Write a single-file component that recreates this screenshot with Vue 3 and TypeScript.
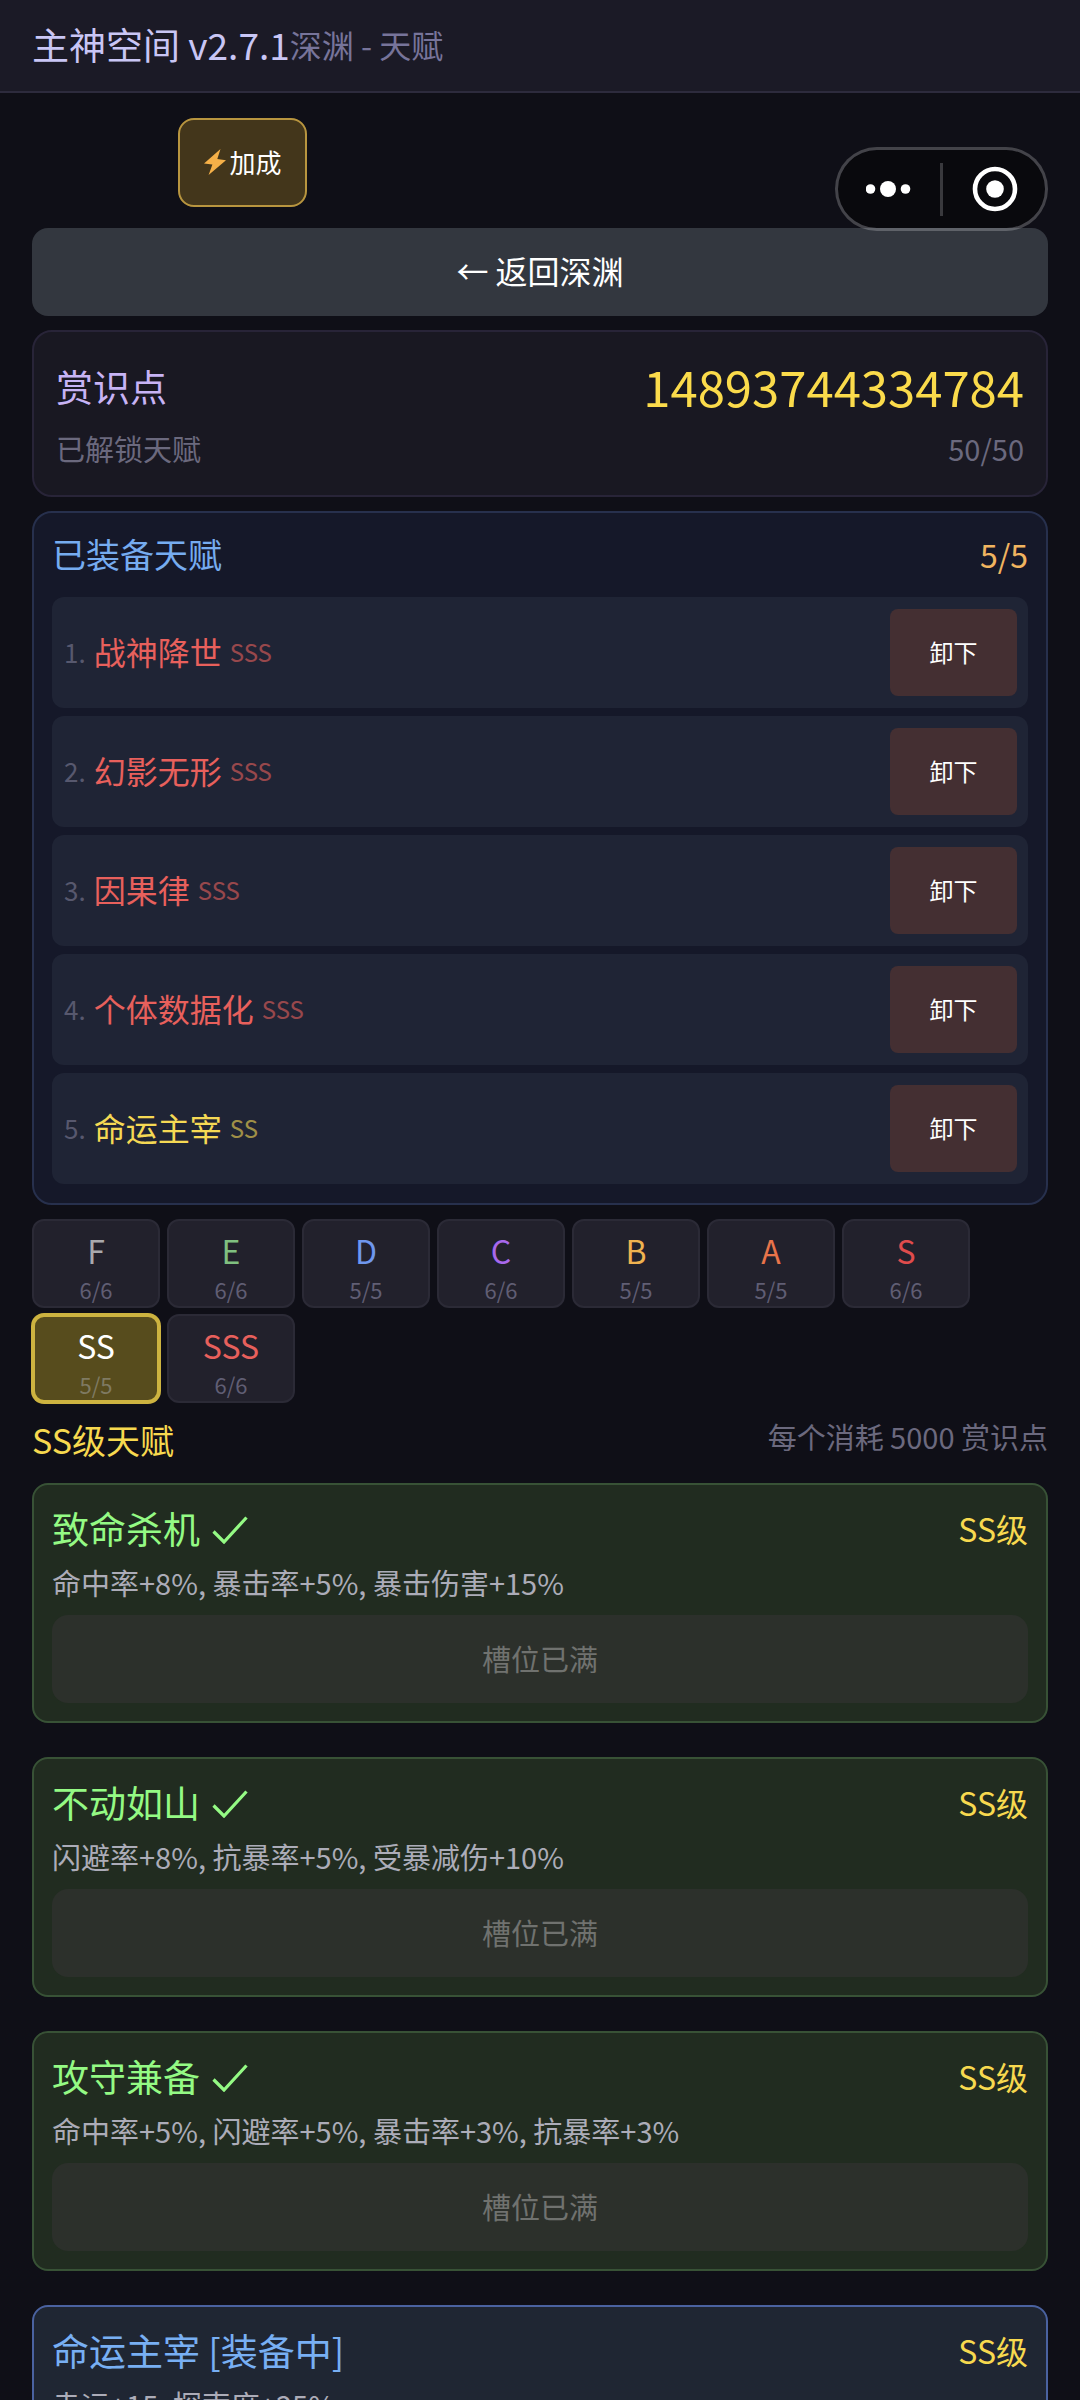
<script setup lang="ts">
import { ref } from 'vue'

interface Equipped {
  name: string
  grade: string
}

interface Grade {
  id: string
  count: string
}

interface Talent {
  name: string
  desc: string
  equipped: boolean
}

const equipped: Equipped[] = [
  { name: '战神降世', grade: 'SSS' },
  { name: '幻影无形', grade: 'SSS' },
  { name: '因果律', grade: 'SSS' },
  { name: '个体数据化', grade: 'SSS' },
  { name: '命运主宰', grade: 'SS' },
]

const grades: Grade[] = [
  { id: 'F', count: '6/6' },
  { id: 'E', count: '6/6' },
  { id: 'D', count: '5/5' },
  { id: 'C', count: '6/6' },
  { id: 'B', count: '5/5' },
  { id: 'A', count: '5/5' },
  { id: 'S', count: '6/6' },
  { id: 'SS', count: '5/5' },
  { id: 'SSS', count: '6/6' },
]

const talents: Talent[] = [
  { name: '致命杀机', desc: '命中率+8%, 暴击率+5%, 暴击伤害+15%', equipped: false },
  { name: '不动如山', desc: '闪避率+8%, 抗暴率+5%, 受暴减伤+10%', equipped: false },
  { name: '攻守兼备', desc: '命中率+5%, 闪避率+5%, 暴击率+3%, 抗暴率+3%', equipped: false },
  { name: '命运主宰', desc: '幸运+15, 探索度+25%', equipped: true },
]

const active = ref('SS')
</script>

<template>
  <div class="app">
    <header class="topbar">
      <h1 class="topbar-title">主神空间 v2.7.1</h1>
      <span class="topbar-sub">深渊 - 天赋</span>
    </header>

    <div class="capsule">
      <button class="capsule-btn" type="button" aria-label="更多">
        <svg width="46" height="20" viewBox="0 0 46 20" fill="#fff">
          <circle cx="4.5" cy="10" r="4.8" />
          <circle cx="22" cy="10" r="8" />
          <circle cx="39.5" cy="10" r="4.8" />
        </svg>
      </button>
      <span class="capsule-line"></span>
      <button class="capsule-btn" type="button" aria-label="关闭">
        <svg width="48" height="46" viewBox="0 0 48 46">
          <circle cx="25" cy="23" r="20" fill="none" stroke="#fff" stroke-width="4.6" />
          <circle cx="25" cy="23" r="8.8" fill="#fff" />
        </svg>
      </button>
    </div>

    <main class="content">
      <div class="tools">
        <button class="bonus" type="button">
          <svg width="24" height="26" viewBox="0 0 24 26" fill="#f5b048" aria-hidden="true">
            <path d="M17.5 0 1 14.6l8.4 1L5.6 26 23 11.2l-8.7-1.1z" />
          </svg>
          <span>加成</span>
        </button>
      </div>

      <button class="back" type="button">← 返回深渊</button>

      <section class="points">
        <div class="row">
          <span class="points-label">赏识点</span>
          <span class="points-value">14893744334784</span>
        </div>
        <div class="row points-sub">
          <span>已解锁天赋</span>
          <span>50/50</span>
        </div>
      </section>

      <section class="equipped">
        <div class="row equipped-head">
          <h2 class="equipped-title">已装备天赋</h2>
          <span class="equipped-count">5/5</span>
        </div>
        <ol class="slots">
          <li v-for="(item, i) in equipped" :key="item.name" class="slot">
            <div class="slot-text">
              <span class="slot-no">{{ i + 1 }}.</span>
              <span class="slot-name" :class="`g-${item.grade}`">{{ item.name }}</span>
              <span class="slot-grade" :class="`g-${item.grade}`">{{ item.grade }}</span>
            </div>
            <button class="remove" type="button">卸下</button>
          </li>
        </ol>
      </section>

      <nav class="grades">
        <button
          v-for="g in grades"
          :key="g.id"
          type="button"
          class="grade"
          :class="{ active: g.id === active }"
          @click="active = g.id"
        >
          <span class="grade-id" :class="`g-${g.id}`">{{ g.id }}</span>
          <span class="grade-count">{{ g.count }}</span>
        </button>
      </nav>

      <div class="section-head">
        <h2 class="section-title">SS级天赋</h2>
        <span class="section-cost">每个消耗 5000 赏识点</span>
      </div>

      <div class="talents">
        <article v-for="t in talents" :key="t.name" class="talent" :class="{ worn: t.equipped }">
          <div class="row">
            <h3 class="talent-name">
              {{ t.name }}
              <template v-if="t.equipped">[装备中]</template>
              <svg v-else class="check" width="36" height="28" viewBox="0 0 36 28" role="img" aria-label="已解锁">
                <path d="M1.5 15.5 12 26 34.5 1.5" fill="none" stroke="currentColor" stroke-width="3.2" />
              </svg>
            </h3>
            <span class="talent-grade">SS级</span>
          </div>
          <p class="talent-desc">{{ t.desc }}</p>
          <button v-if="!t.equipped" class="full" type="button" disabled>槽位已满</button>
        </article>
      </div>
    </main>
  </div>
</template>

<style>
html,
body {
  background: #0f0f17;
}
</style>

<style scoped>
.app {
  position: relative;
  box-sizing: border-box;
  height: 100vh;
  overflow: hidden;
  background: #0f0f17;
  color: #fff;
  font-family: 'Noto Sans CJK SC', 'Noto Sans', sans-serif;
}

.app *,
.app *::before {
  box-sizing: border-box;
}

button {
  margin: 0;
  padding: 0;
  border: 0;
  font: inherit;
  color: inherit;
  background: none;
}

h1,
h2,
h3,
p,
ol {
  margin: 0;
  padding: 0;
  font-weight: 400;
  list-style: none;
}

.row {
  display: flex;
  align-items: center;
  justify-content: space-between;
}

.topbar {
  display: flex;
  align-items: center;
  height: 93px;
  padding: 0 32px 4px;
  background: #1b1a26;
  border-bottom: 2px solid #2d2b3d;
}

.topbar-title {
  font-size: 37px;
  color: #c9c6f5;
}

.topbar-sub {
  font-size: 32px;
  color: #77749a;
}

.capsule {
  position: absolute;
  top: 147px;
  right: 32px;
  z-index: 2;
  display: flex;
  align-items: center;
  width: 213px;
  height: 84px;
  border: 3px solid rgba(255, 255, 255, 0.22);
  border-radius: 42px;
  background: #09090d;
  background-clip: padding-box;
}

.capsule-btn {
  display: flex;
  flex: 1;
  align-items: center;
  justify-content: center;
}

.capsule-line {
  width: 3px;
  height: 53px;
  background: #39393d;
}

.content {
  padding: 25px 32px 0;
}

.tools {
  display: flex;
  padding-left: 146px;
  margin-bottom: 21px;
}

.bonus {
  display: flex;
  align-items: center;
  justify-content: center;
  gap: 2px;
  width: 129px;
  height: 89px;
  padding-bottom: 2px;
  border: 2px solid #b8953f;
  border-radius: 16px;
  background: #43361b;
  font-size: 26px;
}

.back {
  display: block;
  width: 100%;
  height: 88px;
  padding-bottom: 4px;
  border-radius: 16px;
  background: #33373f;
  font-size: 32px;
}

.points {
  margin-top: 14px;
  padding: 24px 22px;
  border: 2px solid #282438;
  border-radius: 20px;
  background: #191822;
  line-height: 60px;
}

.points-label {
  font-size: 37px;
  color: #c7b3f5;
}

.points-value {
  font-size: 49px;
  color: #fbdb4b;
}

.points-sub {
  margin-top: 9px;
  font-size: 29px;
  line-height: 46px;
  color: #6b697e;
}

.equipped {
  margin-top: 14px;
  padding: 16px 18px 19px;
  border: 2px solid #27304d;
  border-radius: 20px;
  background: #151829;
}

.equipped-head {
  margin-bottom: 18px;
  line-height: 50px;
}

.equipped-title {
  font-size: 34px;
  color: #76acf0;
}

.equipped-count {
  font-size: 32px;
  color: #f0b460;
}

.slots {
  display: flex;
  flex-direction: column;
  gap: 8px;
}

.slot {
  display: flex;
  align-items: center;
  justify-content: space-between;
  padding: 12px 11px 12px 12px;
  border-radius: 12px;
  background: #1f2435;
}

.slot-text {
  display: flex;
  align-items: center;
  gap: 8px;
  padding-bottom: 3px;
}

.slot-no {
  font-size: 26px;
  color: #57586e;
}

.slot-name {
  font-size: 32px;
}

.slot-grade {
  font-size: 24px;
  opacity: 0.6;
}

.remove {
  width: 127px;
  height: 87px;
  padding-bottom: 2px;
  border-radius: 8px;
  background: #442f32;
  font-size: 24px;
}

.grades {
  display: flex;
  flex-wrap: wrap;
  gap: 6px 7px;
  margin-top: 14px;
}

.grade {
  display: flex;
  flex-direction: column;
  align-items: center;
  gap: 4px;
  width: 128px;
  height: 89px;
  padding-top: 7px;
  border: 2px solid #2b2a36;
  border-radius: 12px;
  background: #22212c;
}

.grade-id {
  font-size: 32px;
  line-height: 44px;
}

.grade-count {
  font-size: 22px;
  line-height: 26px;
  color: #605e74;
}

.grade.active {
  padding-top: 6px;
  border: 3px solid #cdb340;
  box-shadow: 0 0 0 1px #cdb340;
  background: #574c1d;
}

.grade.active .grade-id {
  color: #fff;
}

.grade.active .grade-count {
  color: #7f7a62;
}

.g-F {
  color: #a9a9ad;
}

.g-E {
  color: #80c080;
}

.g-D {
  color: #6f97ee;
}

.g-C {
  color: #a868ec;
}

.g-B {
  color: #f0b350;
}

.g-A {
  color: #e8744a;
}

.g-S {
  color: #e04c4c;
}

.g-SS {
  color: #f5d954;
}

.g-SSS {
  color: #e8605c;
}

.section-head {
  display: flex;
  align-items: flex-start;
  justify-content: space-between;
  margin: 12px 0 18px;
}

.section-title {
  font-size: 34px;
  line-height: 50px;
  color: #f7d94f;
}

.section-cost {
  font-size: 29px;
  line-height: 42px;
  color: #6b697e;
}

.talents {
  display: flex;
  flex-direction: column;
  gap: 34px;
}

.talent {
  padding: 16px 18px 18px;
  border: 2px solid #385236;
  border-radius: 16px;
  background: #212c20;
}

.talent.worn {
  border-color: #4a62a0;
  background: #1f2633;
}

.talent-name {
  font-size: 37px;
  line-height: 54px;
  color: #94fa84;
}

.check {
  margin-left: 4px;
}

.worn .talent-name {
  color: #78aff3;
}

.talent-grade {
  font-size: 32px;
  color: #f7d94f;
}

.talent-desc {
  margin-top: 5px;
  font-size: 29px;
  line-height: 44px;
  color: #acacb8;
}

.full {
  display: block;
  width: 100%;
  height: 88px;
  margin-top: 11px;
  padding-bottom: 2px;
  border-radius: 16px;
  background: #2c302b;
  font-size: 29px;
  color: #70726f;
}
</style>
